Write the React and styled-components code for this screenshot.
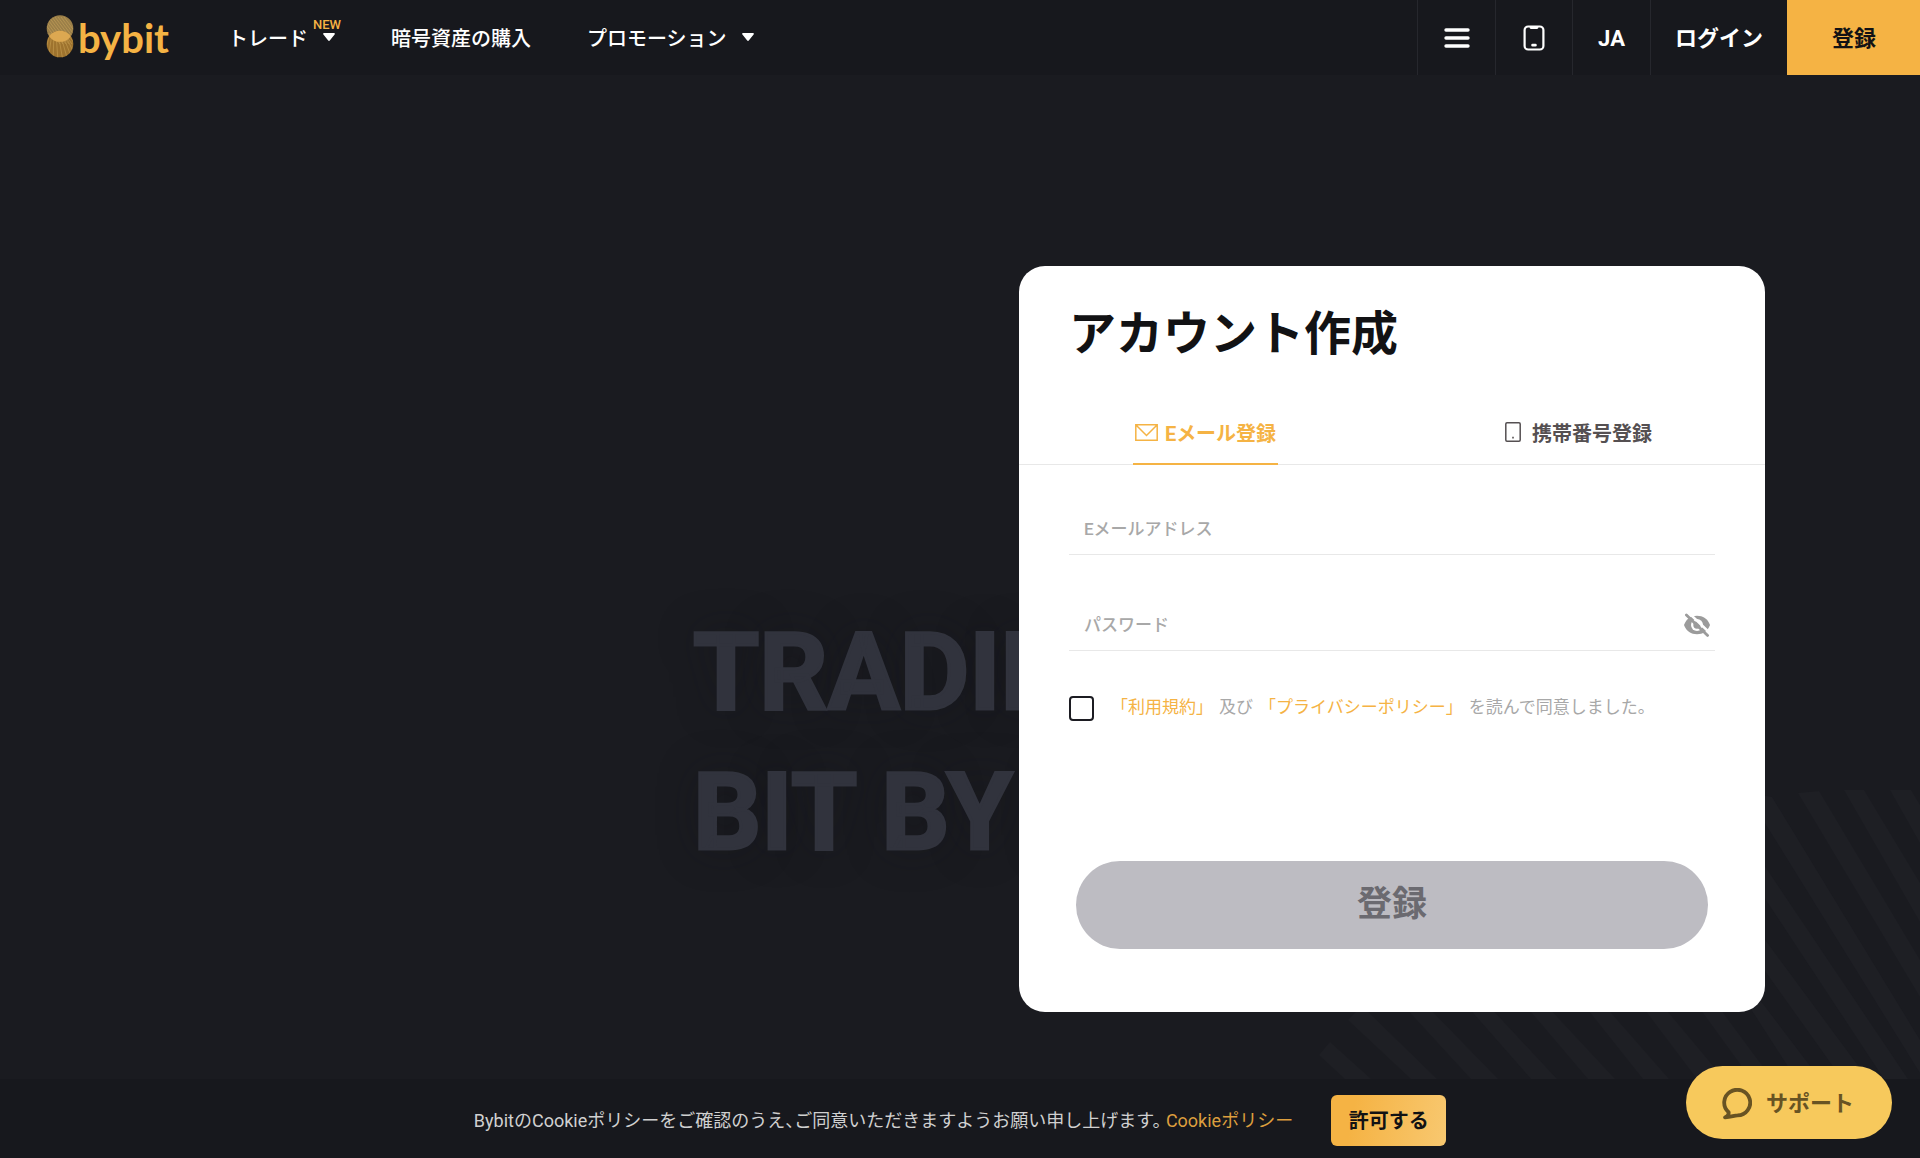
import React, { useState } from "react";
import styled, { createGlobalStyle } from "styled-components";

const color = {
  page: "#1a1b20",
  bar: "#17181d",
  line: "#26272d",
  brand: "#f5b344",
  ghost: "#31333d",
  stripe: "#1e1f24",
  ink: "#121214",
  muted: "#a8a8a8",
  rule: "#e8e8e8",
};

const GlobalStyle = createGlobalStyle`
  *, *::before, *::after { box-sizing: border-box; }
  body {
    margin: 0;
    background: ${color.page};
    color: #fff;
    font-family: Roboto, "Noto Sans CJK JP", sans-serif;
  }
  button, input { font-family: inherit; }
  a { color: inherit; text-decoration: none; }
`;

const Page = styled.div`
  display: flex;
  flex-direction: column;
  min-height: 100vh;
`;

const Header = styled.header`
  display: flex;
  align-items: stretch;
  height: 75px;
  padding-left: 46px;
  background: ${color.bar};
`;

const Brand = styled.a`
  display: flex;
  align-items: center;
  gap: 4px;
  width: 182px;
`;

const BrandMark = styled.svg`
  width: 28px;
  height: 46px;
`;

const BrandName = styled.span`
  font-family: Lato, sans-serif;
  font-size: 40px;
  font-weight: 700;
  line-height: 44px;
  color: ${color.brand};
`;

const Nav = styled.nav`
  display: flex;
  align-items: center;
  gap: 56px;
  flex: 1;
  padding-top: 2px;
`;

const NavLink = styled.a`
  position: relative;
  display: flex;
  align-items: center;
  gap: 15px;
  font-size: 20px;
  font-weight: 500;
  line-height: 28px;
  white-space: nowrap;
`;

const Caret = styled.svg`
  width: 12px;
  height: 8px;
  margin-bottom: 4px;
  fill: #fff;
`;

const NewBadge = styled.span`
  position: absolute;
  top: -8px;
  right: -6px;
  font-size: 13px;
  font-weight: 500;
  line-height: 16px;
  color: ${color.brand};
`;

const Actions = styled.div`
  display: flex;
`;

const ActionButton = styled.button`
  display: flex;
  align-items: center;
  justify-content: center;
  width: ${(p) => p.$width}px;
  padding: 0;
  border: 0;
  border-left: 1px solid ${(p) => (p.$primary ? color.brand : color.line)};
  background: ${(p) => (p.$primary ? color.brand : "transparent")};
  color: ${(p) => (p.$primary ? color.ink : "#fff")};
  cursor: pointer;
`;

const TextAction = styled(ActionButton)`
  padding-top: 2px;
  font-size: 22px;
  font-weight: 700;
  line-height: 32px;
`;

const Hero = styled.main`
  display: grid;
  grid-template-columns: 1fr;
  grid-template-rows: 1fr;
  flex: 1;
  overflow: hidden;
`;

const Slogan = styled.p`
  grid-area: 1 / 1;
  margin: 0;
  padding: 528px 0 0 693px;
  font-size: 107px;
  font-weight: 700;
  line-height: 140px;
  white-space: nowrap;
  color: ${color.ghost};
  -webkit-text-stroke: 3px ${color.ghost};
  text-shadow: 0 0 40px rgba(20, 21, 24, 0.4);
`;

const Stripes = styled.svg`
  grid-area: 1 / 1;
  align-self: end;
  justify-self: end;
  width: 604px;
  height: 290px;
  fill: ${color.stripe};
`;

const Card = styled.form`
  grid-area: 1 / 1;
  align-self: start;
  justify-self: end;
  z-index: 1;
  width: 746px;
  margin: 191px 155px 67px 0;
  padding: 34px 0 63px;
  border-radius: 26px;
  background: #fff;
`;

const Title = styled.h1`
  margin: 0 50px 37px;
  font-size: 47px;
  font-weight: 700;
  line-height: 68px;
  color: ${color.ink};
`;

const Tabs = styled.div`
  display: grid;
  grid-template-columns: 1fr 1fr;
  justify-items: center;
  height: 60px;
  border-bottom: 1px solid ${color.rule};
`;

const Tab = styled.button`
  display: flex;
  align-items: center;
  gap: ${(p) => p.$gap}px;
  height: 60px;
  padding: 0 2px;
  border: 0;
  border-bottom: 2px solid ${(p) => (p.$active ? color.brand : "transparent")};
  background: none;
  color: ${(p) => (p.$active ? color.brand : "#555052")};
  font-size: 20px;
  font-weight: 700;
  line-height: 28px;
  cursor: pointer;

  svg { margin-bottom: 4px; }
`;

const Fields = styled.div`
  display: flex;
  flex-direction: column;
  gap: 46px;
  padding: 40px 50px 0;
`;

const Field = styled.div`
  display: flex;
  align-items: flex-start;
  height: 50px;
  border-bottom: 1px solid ${color.rule};
`;

const TextInput = styled.input`
  flex: 1;
  height: 48px;
  padding: 0 0 0 15px;
  border: 0;
  outline: 0;
  background: none;
  color: ${color.ink};
  font-size: 17px;
  font-weight: 500;

  &::placeholder { color: ${color.muted}; opacity: 1; }
`;

const EyeButton = styled.button`
  display: flex;
  align-items: center;
  height: 48px;
  padding: 0 4px;
  border: 0;
  background: none;
  cursor: pointer;
`;

const Agreement = styled.div`
  display: flex;
  align-items: flex-start;
  gap: 17px;
  padding: 45px 50px 0;
`;

const CheckBox = styled.input`
  appearance: none;
  width: 25px;
  height: 25px;
  margin: 0;
  border: 2px solid #1c1c22;
  border-radius: 4px;
  background: #fff;
  cursor: pointer;
  &:checked { background: ${color.brand}; }
`;

const AgreementText = styled.label`
  display: flex;
  gap: 6px;
  color: ${color.muted};
  font-size: 17px;
  line-height: 23px;
  white-space: nowrap;
`;

const TextLink = styled.a`
  color: ${(p) => (p.$dim ? "#dd9f3e" : color.brand)};
`;

const Submit = styled.button`
  display: block;
  width: calc(100% - 114px);
  height: 88px;
  margin: 140px 57px 0;
  padding: 0;
  border: 0;
  border-radius: 44px;
  background: #bdbcc2;
  color: #6b6a70;
  font-size: 35px;
  font-weight: 700;
  line-height: 52px;
`;

const CookieBar = styled.section`
  display: flex;
  align-items: center;
  justify-content: center;
  gap: 38px;
  height: 79px;
  padding-top: 3px;
  background: ${color.bar};
`;

const CookieText = styled.p`
  margin: 0;
  padding-top: 2px;
  font-size: 18px;
  font-feature-settings: "halt";
  line-height: 24px;
  color: #d0d0d0;
`;

const AcceptButton = styled.button`
  width: 115px;
  height: 51px;
  padding: 2px 0 0;
  border: 0;
  border-radius: 6px;
  background: linear-gradient(100deg, ${color.brand} 20%, #f8c870);
  color: ${color.ink};
  font-size: 20px;
  font-weight: 700;
  line-height: 28px;
  cursor: pointer;
`;

const SupportButton = styled.button`
  position: fixed;
  right: 28px;
  bottom: 19px;
  z-index: 2;
  display: flex;
  align-items: center;
  justify-content: center;
  gap: 14px;
  width: 206px;
  height: 73px;
  padding: 2px 2px 0 0;
  border: 0;
  border-radius: 37px;
  background: #f7c95c;
  color: #685323;
  font-size: 22px;
  font-weight: 700;
  line-height: 32px;
  cursor: pointer;
`;

function Down() {
  return (
    <Caret viewBox="0 0 12 8" aria-hidden="true">
      <path d="M1.2 0h9.6c.9 0 1.4.9.8 1.6L6.8 7.5c-.4.5-1.2.5-1.6 0L.4 1.6C-.2.9.3 0 1.2 0z" />
    </Caret>
  );
}

function Logo() {
  const streaks = [];
  for (let i = 0; i < 9; i += 1) {
    streaks.push(
      <path key={`a${i}`} d={`M${-6 + i * 3} 2L${14 + i * 3} 29`} />,
      <path key={`b${i}`} d={`M${2 + i * 2} 18L${-8 + i * 5} 46`} />
    );
  }
  return (
    <BrandMark viewBox="0 0 28 46" aria-hidden="true">
      <defs>
        <clipPath id="rings">
          <circle cx="14" cy="13.5" r="13.3" />
          <circle cx="14" cy="29" r="13.3" />
        </clipPath>
        <clipPath id="upper">
          <circle cx="14" cy="13.5" r="13.3" />
        </clipPath>
      </defs>
      <circle cx="14" cy="13.5" r="13.3" fill="#9c7f49" />
      <circle cx="14" cy="29" r="13.3" fill="#9f742f" />
      <g clipPath="url(#rings)" fill="none" stroke="#d8b062" strokeWidth=".7" opacity=".6">
        {streaks}
      </g>
      <circle cx="14" cy="29" r="13.3" fill="#dca851" clipPath="url(#upper)" />
    </BrandMark>
  );
}

export default function App() {
  const [tab, setTab] = useState("email");
  const [visible, setVisible] = useState(false);

  return (
    <Page>
      <GlobalStyle />
      <Header>
        <Brand href="#" aria-label="bybit">
          <Logo />
          <BrandName>bybit</BrandName>
        </Brand>
        <Nav>
          <NavLink href="#">
            トレード
            <Down />
            <NewBadge>NEW</NewBadge>
          </NavLink>
          <NavLink href="#">暗号資産の購入</NavLink>
          <NavLink href="#">
            プロモーション
            <Down />
          </NavLink>
        </Nav>
        <Actions>
          <ActionButton type="button" $width={78} aria-label="メニュー">
            <svg width="26" height="20" viewBox="0 0 26 20" fill="none" stroke="#fff" strokeWidth="3.4" strokeLinecap="round">
              <path d="M2 2h22M2 10h22M2 18h22" />
            </svg>
          </ActionButton>
          <ActionButton type="button" $width={77} aria-label="アプリ">
            <svg width="22" height="26" viewBox="0 0 22 26" fill="none" stroke="#fff" strokeWidth="2.2" strokeLinecap="round">
              <rect x="1.6" y="1.5" width="18.8" height="23" rx="3.6" />
              <path d="M8 2.6h6M9.6 20.2h2.8" strokeWidth="2.8" />
            </svg>
          </ActionButton>
          <TextAction type="button" $width={78}>JA</TextAction>
          <TextAction type="button" $width={137}>ログイン</TextAction>
          <TextAction type="button" $width={133} $primary>登録</TextAction>
        </Actions>
      </Header>

      <Hero>
        <Slogan>
          TRADING
          <br />
          BIT BY BIT
        </Slogan>
        <Stripes viewBox="1316 789 604 290" aria-hidden="true">
          <path d="M1319 1055L1330 1042L1371 1079H1345z" />
          <path d="M1348 1020L1362 1006L1437 1079H1411z" />
          <path d="M1404 1006H1427L1498 1079H1471z" />
          <path d="M1467 1006H1489L1557 1079H1531z" />
          <path d="M1526 1006H1547L1615 1079H1588z" />
          <path d="M1585 1006H1605L1669 1079H1643z" />
          <path d="M1642 1006H1663L1724 1079H1697z" />
          <path d="M1698 1006H1718L1772 1079H1751z" />
          <path d="M1749 1006L1760 1000L1820 1079H1796z" />
          <path d="M1760 964V933L1868 1079H1842z" />
          <path d="M1760 891V859L1908 1079H1884z" />
          <path d="M1760 815V795L1772 797L1920 1040V1073z" />
          <path d="M1798 793L1819 791L1920 960V997z" />
          <path d="M1844 790H1864L1920 883V922z" />
          <path d="M1890 790H1911L1920 805V843z" />
        </Stripes>

        <Card onSubmit={(e) => e.preventDefault()}>
          <Title>アカウント作成</Title>
          <Tabs role="tablist">
            <Tab type="button" role="tab" $gap={7} $active={tab === "email"} aria-selected={tab === "email"} onClick={() => setTab("email")}>
              <svg width="23" height="17" viewBox="0 0 23 17" fill="none" stroke="currentColor" strokeWidth="1.5" aria-hidden="true">
                <path d="M.8.8h21.4v15.4H.8zM1 1l10.5 10.5L22 1" />
              </svg>
              Eメール登録
            </Tab>
            <Tab type="button" role="tab" $gap={11} $active={tab === "phone"} aria-selected={tab === "phone"} onClick={() => setTab("phone")}>
              <svg width="16" height="20" viewBox="0 0 16 20" fill="none" stroke="currentColor" strokeWidth="1.5" aria-hidden="true">
                <rect x=".8" y=".8" width="14.4" height="18.4" rx="1.2" />
                <path d="M7.2 15.6h1.6" strokeWidth="1.6" />
              </svg>
              携帯番号登録
            </Tab>
          </Tabs>

          <Fields>
            <Field>
              <TextInput type="text" placeholder="Eメールアドレス" aria-label="Eメールアドレス" />
            </Field>
            <Field>
              <TextInput type={visible ? "text" : "password"} placeholder="パスワード" aria-label="パスワード" />
              <EyeButton type="button" aria-label="パスワードを表示" onClick={() => setVisible(!visible)}>
                <svg width="28" height="24" viewBox="0 0 28 24">
                  <path d="M1 12C3.5 5.5 8 2.8 14 2.8S24.5 5.5 27 12c-2.5 6.5-7 9.2-13 9.2S3.5 18.5 1 12z" fill="#9b9b9b" />
                  <circle cx="14" cy="12" r="6" fill="#fff" />
                  <circle cx="14" cy="12" r="3.7" fill="#9b9b9b" />
                  <path d="M5.4-.4L27.6 20.6" stroke="#fff" strokeWidth="2.6" />
                  <path d="M3.4 2L24.6 22.4" stroke="#9b9b9b" strokeWidth="2.8" strokeLinecap="round" />
                </svg>
              </EyeButton>
            </Field>
          </Fields>

          <Agreement>
            <CheckBox type="checkbox" id="agree" />
            <AgreementText htmlFor="agree">
              <TextLink href="#">「利用規約」</TextLink>
              及び
              <TextLink href="#">「プライバシーポリシー」</TextLink>
              を読んで同意しました。
            </AgreementText>
          </Agreement>

          <Submit type="submit" disabled>登録</Submit>
        </Card>
      </Hero>

      <CookieBar aria-label="Cookie">
        <CookieText>
          BybitのCookieポリシーをご確認のうえ、ご同意いただきますようお願い申し上げます。{" "}
          <TextLink href="#" $dim>Cookieポリシー</TextLink>
        </CookieText>
        <AcceptButton type="button">許可する</AcceptButton>
      </CookieBar>

      <SupportButton type="button">
        <svg width="30" height="32" viewBox="0 0 30 32" fill="none" stroke="currentColor" strokeWidth="3.8" strokeLinejoin="round" aria-hidden="true">
          <path d="M6.6 24.2A13 12.8 0 1 1 15.5 27.4C12.5 27.4 9.5 28.8 3 29.4C6 28 7 26.5 6.6 24.2z" />
        </svg>
        サポート
      </SupportButton>
    </Page>
  );
}
